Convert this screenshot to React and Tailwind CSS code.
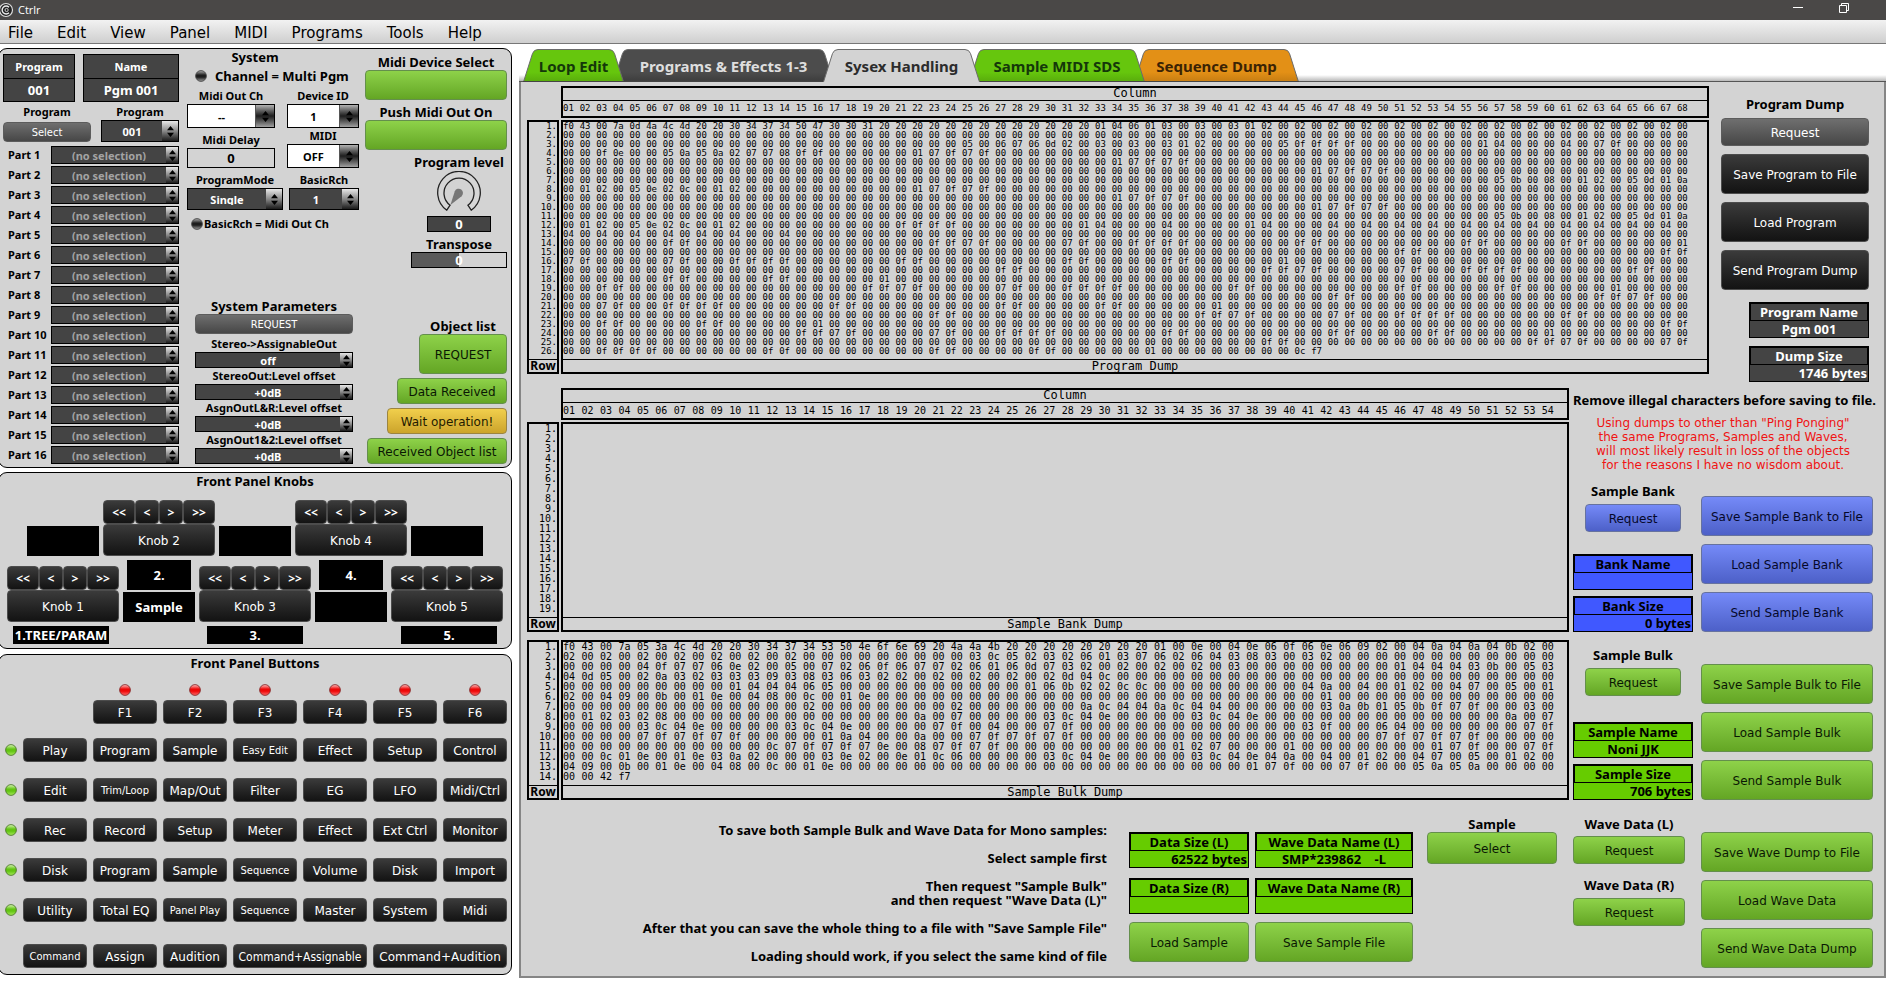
import React from "react";

const expand = (line) =>
  line.split(" ").flatMap((token) => {
    const [value, times] = token.split("*");
    return Array(times ? Number(times) : 1).fill(value);
  });

const PROGRAM_DUMP = [
  "f0 43 00 7a 0d 4a 4c 4d 20 20 30 34 37 34 50 47 30 30 31 20*13 01 04 06 01 03 00 03 00 03 01 02 00 02 00 02 00 02 00 02 00 02 00 02 00 02 00 02 00 02 00 02 00 02 00 02 00",
  "00*68",
  "00*24 05 00 06 07 06 0d 02 00 03 00 03 00 03 01 02 00*4 05 0f*4 00*7 01 04 00*3 04 00 07 0f 00*4",
  "00 00 0f 0e 00 00 05 0a 05 0a 02 07 07 08 0f 0f 00*5 01 07 0f 07 0f 00*42",
  "00*33 01 07 0f 07 0f 00*30",
  "00*45 01 07 0f 07 0f 00*18",
  "00*56 05 0b 00 08 00 01 02 00 05 0d 01 0a",
  "00 01 02 00 05 0e 02 0c 00 01 02 00*10 01 07 0f 07 0f 00*42",
  "00*33 01 07 0f 07 0f 00*30",
  "00*45 01 07 0f 07 0f 00*18",
  "00*56 05 0b 00 08 00 01 02 00 05 0d 01 0a",
  "00 01 02 00 05 0e 02 0c 00 01 02 00*9 0f*4 00*7 01 04 00*3 04 00*4 01 04 00*3 04 00 04 00 04 00 04 00 04 00 04 00 04 00 04 00 04 00 04 00 04 00",
  "04 00 04 00 04 00 04 00 04 00 04 00 00 04 00*54",
  "00*6 0f 0f 00*14 0f 0f 07 0f 00*4 07 0f 00 00 0f*4 00*6 0f 0f 00*8 0f 0f 00*4 0f 0f 00*5 01",
  "00*50 0f 0f 00*14 0f 0f",
  "07 0f 00*4 07 0f 00 00 0f*4 00*6 0f 0f 00*8 0f 0f 00*4 0f 0f 00*5 01 00*24",
  "00*26 0f 0f 00*14 0f 0f 07 0f 00*4 07 0f 00 00 0f*4 00*6 0f 0f 00 00",
  "00*6 0f 0f 00*4 0f 0f 00*5 01 00*48",
  "00 00 0f 0f 00*14 0f 0f 07 0f 00*4 07 0f 00 00 0f*4 00*6 0f 0f 00*8 0f 0f 00*4 0f 0f 00*5 01 00*4",
  "00*46 0f 0f 00*14 0f 0f 07 0f 00 00",
  "00 00 07 0f 00 00 0f*4 00*6 0f 0f 00*8 0f 0f 00*4 0f 0f 00*5 01 00*28",
  "00*22 0f 0f 00*14 0f 0f 07 0f 00*4 07 0f 00 00 0f*4 00*6 0f 0f 00*6",
  "00 00 0f 0f 00*4 0f 0f 00*5 01 00*50 0f 0f",
  "00*14 0f 0f 07 0f 00*4 07 0f 00 00 0f*4 00*6 0f 0f 00*8 0f 0f 00*4 0f 0f 00*5 01 00*8",
  "00*42 0f 0f 00*14 0f 0f 07 0f 00*4 07 0f",
  "00 00 0f*4 00*6 0f 0f 00*8 0f 0f 00*4 0f 0f 00*5 01 00*8 0c f7",
].map(expand);

const BANK_DUMP = Array(19).fill([]);

const BULK_DUMP = [
  "f0 43 00 7a 05 3a 4c 4d 20 20 30 34 37 34 53 50 4e 6f 6e 69 20 4a 4a 4b 20 20 20*6 01 00 0e 00 04 0e 06 0f 06 0e 06 09 02 00 04 0a 04 0a 04 0b 02 00",
  "02 00 02 00 02 00 02 00 02 00 02 00 02 00 00*8 03 0c 05 02 03 02 06 01 03 07 06 02 06 04 03 08 03 00 03 02 00*12",
  "00*4 04 0f 07 07 06 0e 02 00 05 00 07 02 06 0f 06 07 07 02 06 01 06 0d 07 03 02 00 02 00 02 00 02 00 03 00*8 01 04 04 04 03 0b 00 05 03",
  "04 0d 05 00 02 0a 03 02 03 03 03 09 03 08 03 06 03 02 02 00 02 00 02 00 02 00 02 0d 04 0c 00*24",
  "00*9 01 04 04 04 06 05 00*10 01 06 0b 02 02 0c 0c 00*8 04 0a 00 04 00 01 02 00 04 07 00 05 00 01",
  "02 00 04 09 00 0b 00 01 0e 00 04 08 00 0c 00 01 0e 00*24 01 00*12",
  "00*13 02 00*7 02 00*6 0a 0c 04 04 0a 0c 04 04 00*5 03 0a 0b 01 05 0b 0f 07 0f 00 00 03 00",
  "00 01 02 03 02 08 00*13 0a 00 07 00*4 03 0c 04 0e 00*4 03 0c 04 0e 00*13 0a 00 07",
  "00*4 03 0c 04 0e 00*4 03 0c 04 0e 00*4 07 0f 00 04 00 00 07 0f 00*12 03 0f 00 00 06 04 00*6 07 0f",
  "00*4 07 0f 07 0f 07 0f 00*4 01 0a 04 00 00 0a 00 00 07 0f 07 0f 07 0f 00*16 07 0f 07 0f 07 0f 00*4",
  "00*11 0c 07 0f 07 0f 07 0e 00 08 07 0f 07 0f 00*9 01 02 07 00*3 01 00*7 01 07 0f 00 00 07 0f",
  "00 00 0c 01 0e 00 01 0e 03 0a 02 00*3 03 0e 02 00 0e 01 0c 06 00*4 03 0c 04 0e 00*4 03 0c 04 0e 04 0a 00 04 00 01 02 00 04 07 00 05 00 01 02 00",
  "04 09 00 0b 00 01 0e 00 04 08 00 0c 00 01 0e 00*22 01 07 0f 00 00 07 0f 00 00 05 0a 05 0a 00*4",
  "00 00 42 f7",
].map(expand);

const BOLD = "font-['Noto_Sans','Open_Sans',sans-serif] font-bold";
const CONDENSED = "font-['DejaVu_Sans_Condensed','DejaVu_Sans',sans-serif]";

const TONES = {
  dark: "bg-linear-to-b from-[#3b3b3b] to-[#131313] border-[#4c4c4c] text-white",
  gray: "bg-linear-to-b from-[#6f6f6f] to-[#474747] border-[#5c5c5c] text-white",
  green: "bg-linear-to-b from-[#8ed249] to-[#64a624] border-[#648f4c] text-[#0a1803]",
  blue: "bg-linear-to-b from-[#758af8] to-[#4d60c8] border-[#66729f] text-[#05082a]",
  yellow: "bg-linear-to-b from-[#f1cf4c] to-[#cca42b] border-[#9c8540] text-[#241b00]",
};

function Btn({ tone = "dark", className = "", children, ...rest }) {
  return (
    <button
      type="button"
      className={`flex items-center justify-center whitespace-nowrap rounded border pt-0.5 text-xs leading-4 ${TONES[tone]} ${className}`}
      {...rest}
    >
      {children}
    </button>
  );
}

function Label({ size = "text-[11px]", className = "", as: Tag = "div", children, ...rest }) {
  return (
    <Tag className={`${BOLD} ${size} block h-4 whitespace-nowrap text-center leading-4 ${className}`} {...rest}>
      {children}
    </Tag>
  );
}

function Arrows({ className }) {
  return (
    <span className={`pointer-events-none flex shrink-0 items-center justify-center ${className}`}>
      <svg width="7" height="11" viewBox="0 0 7 11" fill="#000" aria-hidden="true">
        <path d="M3.5 0 7 4.2H0zM3.5 11 0 6.8h7z" />
      </svg>
    </span>
  );
}

function Stepper({ id, label, value, tone = "dark", size = "text-[11px]", className = "", arrows = "w-4" }) {
  const body = tone === "white" ? "bg-white text-black" : tone === "muted" ? "bg-[#444] text-[#a3a3a3]" : "bg-[#444] text-white";
  const fill =
    tone === "white"
      ? "bg-linear-to-b from-[#b4b4b4] via-[#1e1e1e] to-[#a2a2a2] border-l border-[#555]"
      : "bg-linear-to-b from-[#e8e8e8] via-[#8a8a8a] to-[#1c1c1c]";
  return (
    <div className={`flex border border-black ${body} ${className}`}>
      <select
        id={id}
        aria-label={label}
        defaultValue={value}
        className={`min-w-0 flex-1 appearance-none bg-transparent p-0 leading-none [text-align-last:center] ${BOLD} ${size}`}
      >
        <option>{value}</option>
      </select>
      <Arrows className={`${arrows} ${fill}`} />
    </div>
  );
}

const LEDS = {
  red: { rim: "#8a2f2f", top: "#ffc4c4", mid: "#ee0808", low: "#ff6a6a" },
  green: { rim: "#4f7a2d", top: "#dcf8ba", mid: "#62c412", low: "#a6ea5c" },
  off: { rim: "#4a4a4a", top: "#b0b0b0", mid: "#1d1d1d", low: "#a0a0a0" },
};

function Led({ color = "off" }) {
  const c = LEDS[color];
  return (
    <svg width="12" height="12" viewBox="0 0 12 12" className="shrink-0" aria-hidden="true">
      <defs>
        <linearGradient id={`led-${color}`} x1="0" y1="0" x2="0" y2="1">
          <stop offset="0" stopColor={c.top} />
          <stop offset="0.42" stopColor={c.mid} />
          <stop offset="0.6" stopColor={c.mid} />
          <stop offset="1" stopColor={c.low} />
        </linearGradient>
      </defs>
      <circle cx="6" cy="6" r="5.4" fill={`url(#led-${color})`} stroke={c.rim} strokeWidth="0.9" />
    </svg>
  );
}

function Panel({ className = "", children }) {
  return <section className={`-ml-0.5 rounded-[9px] border border-black bg-[#d3d3d3] ${className}`}>{children}</section>;
}

function Readout({ title, value, className }) {
  return (
    <div className={`flex h-12 flex-col border border-black bg-[#444] text-center text-white ${BOLD} ${className}`}>
      <div className="flex-1 border-b border-black text-[11px] leading-[23px]">{title}</div>
      <div className="flex-1 text-[13px] leading-[22px]">{value}</div>
    </div>
  );
}

function SystemPanel() {
  return (
    <Panel className="flex pr-1 pb-[3px] pl-1">
      <div className="w-44 pt-[5px]">
        <div className="flex gap-2">
          <Readout title="Program" value="001" className="w-[72px]" />
          <Readout title="Name" value="Pgm 001" className="w-24" />
        </div>
        <div className="mt-0.5 flex items-end justify-between">
          <div className="w-[88px]">
            <Label className="mb-0.5">Program</Label>
            <Btn tone="gray" className={`h-5 w-full text-[11px] ${CONDENSED}`}>Select</Btn>
          </div>
          <div className="w-[78px]">
            <Label as="label" htmlFor="program-no">Program</Label>
            <Stepper id="program-no" value="001" className="h-[22px]" />
          </div>
        </div>
        <div className="mt-1 flex flex-col gap-0.5">
          {Array.from({ length: 16 }, (_, i) => (
            <div key={i} className="flex h-[18px] items-center justify-between">
              <label htmlFor={`part-${i}`} className={`pl-[5px] text-[11px] leading-4 ${BOLD}`}>
                Part {i + 1}
              </label>
              <Stepper id={`part-${i}`} value="(no selection)" tone="muted" arrows="w-3" className="h-full w-32" />
            </div>
          ))}
        </div>
      </div>

      <div className="ml-2 flex w-[172px] flex-col">
        <Label size="text-[13px]" className="-ml-9">System</Label>
        <div className="mt-[3px] flex items-center gap-2 pl-2">
          <Led />
          <Label size="text-[13px]">Channel = Multi Pgm</Label>
        </div>
        <div className="mt-1 flex justify-between">
          <div className="w-[88px]">
            <Label as="label" htmlFor="midi-out">Midi Out Ch</Label>
            <Stepper id="midi-out" value="--" tone="white" arrows="w-[19px]" className="h-6" />
            <Label as="label" htmlFor="midi-delay" className="mt-1">Midi Delay</Label>
            <input
              id="midi-delay"
              defaultValue="0"
              className={`block h-5 w-full border border-black bg-transparent text-center text-[13px] leading-none ${BOLD}`}
            />
          </div>
          <div className="w-[72px]">
            <Label as="label" htmlFor="device-id">Device ID</Label>
            <Stepper id="device-id" value="1" tone="white" arrows="w-[19px]" className="h-6" />
            <Label as="label" htmlFor="midi-switch">MIDI</Label>
            <Stepper id="midi-switch" value="OFF" tone="white" arrows="w-[19px]" className="h-6" />
          </div>
        </div>
        <div className="mt-1 flex justify-between">
          <div className="w-24">
            <Label as="label" htmlFor="program-mode">ProgramMode</Label>
            <Stepper id="program-mode" value="Single" className="h-[22px]" />
          </div>
          <div className="w-[70px]">
            <Label as="label" htmlFor="basic-rch">BasicRch</Label>
            <Stepper id="basic-rch" value="1" className="h-[22px]" />
          </div>
        </div>
        <div className="mt-1.5 flex items-center gap-px pl-1">
          <Led />
          <Label>BasicRch = Midi Out Ch</Label>
        </div>
        <div className="mt-auto ml-2 w-[158px]">
          <Label size="text-[13px]">System Parameters</Label>
          <Btn tone="gray" className={`mb-0.5 h-5 w-full text-[11px] ${CONDENSED}`}>REQUEST</Btn>
          {[
            ["Stereo->AssignableOut", "off"],
            ["StereoOut:Level offset", "+0dB"],
            ["AsgnOutL&R:Level offset", "+0dB"],
            ["AsgnOut1&2:Level offset", "+0dB"],
          ].map(([name, value]) => (
            <div key={name}>
              <Label as="label" htmlFor={name}>{name}</Label>
              <Stepper id={name} value={value} arrows="w-3" className="h-4" />
            </div>
          ))}
        </div>
      </div>

      <div className="ml-1.5 flex w-[142px] flex-col items-end pt-[5px]">
        <Label size="text-[13px]" className="w-full">Midi Device Select</Label>
        <Btn tone="green" aria-label="Midi Device Select" className="h-[30px] w-full" />
        <Label size="text-[13px]" className="mt-1 w-full">Push Midi Out On</Label>
        <Btn tone="green" aria-label="Push Midi Out On" className="h-[30px] w-full" />
        <div className="mt-1 flex w-24 flex-col items-center">
          <Label as="label" htmlFor="level" size="text-[13px]">Program level</Label>
          <div className="relative mt-px h-[45px]">
            <svg width="46" height="42" viewBox="0 0 46 42" aria-hidden="true">
              <path
                d="M10.8 39.2A21.3 21.3 0 1 1 35.2 39.2L31.9 34.2A15 15 0 1 0 14.1 34.2Z"
                fill="#d6d6d6"
                stroke="#222"
                strokeWidth="1.3"
              />
              <path d="M14.4 34 18.8 20.2A4.3 4.3 0 1 1 25.6 25.2Z" fill="#777" />
            </svg>
            <input id="level" type="range" min="0" max="100" defaultValue="0" className="absolute inset-0 w-full opacity-0" />
          </div>
          <output htmlFor="level" className={`h-4 w-16 border border-black bg-[#444] text-center text-[13px] leading-[14px] text-white ${BOLD}`}>0</output>
          <Label as="label" htmlFor="transpose" size="text-[13px]" className="mt-1">Transpose</Label>
          <div className="relative h-4 w-full">
            <input
              id="transpose"
              type="range"
              min="-64"
              max="64"
              defaultValue="0"
              className="block h-4 w-full appearance-none border border-black bg-linear-to-r from-[#5a5a5a] from-50% to-[#d3d3d3] to-50% [&::-webkit-slider-thumb]:size-0 [&::-webkit-slider-thumb]:appearance-none"
            />
            <span className={`pointer-events-none absolute inset-0 text-center text-[13px] leading-4 text-white ${BOLD}`}>0</span>
          </div>
        </div>
        <div className="mt-auto flex flex-col items-end gap-1">
          <div className="w-[88px]">
            <Label size="text-[13px]">Object list</Label>
            <Btn tone="green" className="h-10 w-full">REQUEST</Btn>
          </div>
          <Btn tone="green" className="h-[26px] w-[110px]">Data Received</Btn>
          <Btn tone="yellow" className="h-[26px] w-[120px]">Wait operation!</Btn>
          <Btn tone="green" className="h-[26px] w-[140px]">Received Object list</Btn>
        </div>
      </div>
    </Panel>
  );
}

function Knob({ n }) {
  return (
    <div className="w-28">
      <div className="flex">
        {["<<", "<", ">", ">>"].map((t) => (
          <Btn key={t} className={`h-6 ${BOLD} ${t.length > 1 ? "w-8" : "w-6"}`}>{t}</Btn>
        ))}
      </div>
      <Btn className="h-8 w-full">Knob {n}</Btn>
    </div>
  );
}

function Screen({ className = "h-[30px] w-[72px]", children }) {
  return (
    <output className={`flex items-center justify-center whitespace-nowrap bg-black text-[13px] leading-4 text-white ${BOLD} ${className}`}>
      {children}
    </output>
  );
}

function KnobsPanel() {
  return (
    <Panel className="pb-1">
      <Label as="h2" size="text-[13px]">Front Panel Knobs</Label>
      <div className="mt-[11px] flex items-end justify-center gap-1">
        <Screen />
        <Knob n={2} />
        <Screen />
        <Knob n={4} />
        <Screen />
      </div>
      <div className="mt-1 flex items-end justify-center gap-1">
        <Knob n={1} />
        <div className="flex flex-col items-center gap-0.5">
          <Screen className="h-[30px] w-16">2.</Screen>
          <Screen>Sample</Screen>
        </div>
        <Knob n={3} />
        <div className="flex flex-col items-center gap-0.5">
          <Screen className="h-[30px] w-16">4.</Screen>
          <Screen />
        </div>
        <Knob n={5} />
      </div>
      <div className="mt-1 flex justify-between px-3.5">
        <Screen className="h-[18px] w-24">1.TREE/PARAM</Screen>
        <Screen className="h-[18px] w-24">3.</Screen>
        <Screen className="h-[18px] w-24">5.</Screen>
      </div>
    </Panel>
  );
}

const BUTTON_ROWS = [
  ["Play", "Program", "Sample", "Easy Edit", "Effect", "Setup", "Control"],
  ["Edit", "Trim/Loop", "Map/Out", "Filter", "EG", "LFO", "Midi/Ctrl"],
  ["Rec", "Record", "Setup", "Meter", "Effect", "Ext Ctrl", "Monitor"],
  ["Disk", "Program", "Sample", "Sequence", "Volume", "Disk", "Import"],
  ["Utility", "Total EQ", "Panel Play", "Sequence", "Master", "System", "Midi"],
];
const NARROW = ["Easy Edit", "Trim/Loop", "Sequence", "Panel Play", "Command"];
const narrow = (t) => (NARROW.includes(t) ? `text-[11px] ${CONDENSED}` : "");

function ButtonsPanel() {
  return (
    <Panel className="mt-px pb-1.5 pl-1.5">
      <Label as="h2" size="text-[13px]" className="pr-1.5">Front Panel Buttons</Label>
      <div className="mt-[13px] grid grid-cols-[12px_repeat(7,64px)] items-center gap-x-1.5">
        {[1, 2, 3, 4, 5, 6].map((n) => (
          <div key={n} className={`mb-1 flex justify-center ${n === 1 ? "col-start-3" : ""}`}>
            <Led color="red" />
          </div>
        ))}
        {[1, 2, 3, 4, 5, 6].map((n) => (
          <Btn key={n} className={`h-6 ${n === 1 ? "col-start-3" : ""}`}>F{n}</Btn>
        ))}
      </div>
      <div className="mt-3.5 grid grid-cols-[12px_repeat(7,64px)] items-center gap-x-1.5 gap-y-4">
        {BUTTON_ROWS.map((row) => (
          <React.Fragment key={row[0]}>
            <Led color="green" />
            {row.map((t, i) => (
              <Btn key={i} className={`h-6 ${narrow(t)}`}>{t}</Btn>
            ))}
          </React.Fragment>
        ))}
      </div>
      <div className="mt-[22px] grid grid-cols-[12px_repeat(7,64px)] gap-x-1.5">
        <Btn className={`col-start-2 h-6 ${narrow("Command")}`}>Command</Btn>
        <Btn className="h-6">Assign</Btn>
        <Btn className="h-6">Audition</Btn>
        <Btn className={`col-span-2 h-6 ${CONDENSED}`}>Command+Assignable</Btn>
        <Btn className="col-span-2 h-6">Command+Audition</Btn>
      </div>
    </Panel>
  );
}

const TABS = [
  { name: "Loop Edit", width: 101, fill: "#66c60d", shade: "#58ab0c", className: "z-20 text-[#14380a]" },
  { name: "Programs & Effects 1-3", width: 221, fill: "#4c4c4c", shade: "#3c3c3c", className: "z-10 text-[#dedede]" },
  { name: "Sysex Handling", width: 157, fill: "#d3d3d3", shade: "#d3d3d3", className: "z-30 text-[#2c2c2c]", active: true },
  { name: "Sample MIDI SDS", width: 176, fill: "#66c60d", shade: "#58ab0c", className: "z-20 text-[#14380a]" },
  { name: "Sequence Dump", width: 165, fill: "#e39016", shade: "#c57c12", className: "z-10 text-[#3b2304]" },
];

function Tabs() {
  return (
    <div role="tablist" className="flex items-end border-b border-[#555] bg-[linear-gradient(to_top,#b9b9b9,#fff_6px)] pt-[5px] pl-[15px]">
      {TABS.map((t) => (
        <button
          key={t.name}
          type="button"
          role="tab"
          aria-selected={Boolean(t.active)}
          className={`relative -mb-px -ml-[11px] h-[33px] whitespace-nowrap text-[15px] leading-8 ${BOLD} ${t.className}`}
          style={{ width: t.width }}
        >
          <svg className="absolute inset-0" width={t.width} height="33" viewBox={`0 0 ${t.width} 33`} aria-hidden="true">
            <defs>
              <linearGradient id={`tab-${t.width}`} x1="0" y1="0" x2="0" y2="1">
                <stop offset="0.7" stopColor={t.fill} />
                <stop offset="1" stopColor={t.shade} />
              </linearGradient>
            </defs>
            <path
              d={`M0.5 33 9.5 4.5Q11 .5 15 .5H${t.width - 15}Q${t.width - 11} .5 ${t.width - 9.5} 4.5L${t.width - 0.5} 33`}
              fill={`url(#tab-${t.width})`}
              stroke="#6b6b6b"
            />
            {!t.active && <path d={`M0 32.5H${t.width}`} stroke="#444" />}
          </svg>
          <span className="relative">{t.name}</span>
        </button>
      ))}
    </div>
  );
}

function Rule({ n, height }) {
  return (
    <tr className={height}>
      <td className="bg-black p-0" />
      <td className="p-0" />
      <td colSpan={n + 2} className="bg-black p-0" />
    </tr>
  );
}

function Dump({ title, columns: n, rows, text, header, tail, rowClass }) {
  return (
    <table aria-label={title} className={`w-full table-fixed border-separate border-spacing-0 font-['DejaVu_Sans_Mono',monospace] text-black ${text}`}>
      <colgroup>
        <col className="w-8" />
        <col className="w-0.5" />
        <col className="w-0.5" />
        {Array.from({ length: n }, (_, i) => (
          <col key={i} />
        ))}
        <col className={tail} />
      </colgroup>
      {header && (
        <thead>
          <tr>
            <td colSpan={2} className="p-0" />
            <td className="bg-black p-0" />
            <th colSpan={n + 1} className="h-[15px] border-t-2 border-r-2 border-b border-black p-0 align-top text-xs leading-[10px] font-normal">Column</th>
          </tr>
          <tr>
            <td colSpan={2} className="p-0" />
            <td className="bg-black p-0" />
            {Array.from({ length: n }, (_, i) => (
              <th key={i} scope="col" className="h-[17px] border-b-2 border-black p-0 text-left font-normal">
                {String(i + 1).padStart(2, "0")}
              </th>
            ))}
            <td className="border-r-2 border-b-2 border-black p-0" />
          </tr>
          <tr className="h-0.5">
            <td colSpan={n + 4} className="p-0" />
          </tr>
        </thead>
      )}
      <tbody>
        <Rule n={n} height="h-0.5" />
        {rows.map((bytes, r) => (
          <tr key={r} className={rowClass}>
            <th scope="row" className="border-x-2 border-black p-0 text-right font-normal">{r + 1}.</th>
            <td className="p-0" />
            <td className="bg-black p-0" />
            {bytes.map((b, c) => (
              <td key={c} className="p-0">{b}</td>
            ))}
            {bytes.length < n && <td colSpan={n - bytes.length} className="p-0" />}
            <td className="border-r-2 border-black p-0" />
          </tr>
        ))}
        <tr className="h-[3px]">
          <td className="border-x-2 border-black p-0" />
          <td className="p-0" />
          <td className="bg-black p-0" />
          <td colSpan={n + 1} className="border-r-2 border-black p-0" />
        </tr>
        <Rule n={n} height="h-px" />
        <tr className="h-3">
          <th className={`border-x-2 border-black p-0 text-xs leading-3 ${BOLD}`}>Row</th>
          <td className="p-0" />
          <td className="bg-black p-0" />
          <td colSpan={n + 1} className="border-r-2 border-black p-0 text-center text-xs leading-3">{title}</td>
        </tr>
        <Rule n={n} height="h-0.5" />
      </tbody>
    </table>
  );
}

const INFO = {
  dark: "bg-[#444] text-white",
  blue: "bg-[#4058ff] text-black",
  green: "bg-[#66cc00] text-black",
};

function Info({ title, value, tone = "green", align = "text-center", className = "w-[120px]" }) {
  return (
    <div className={`whitespace-pre text-[13px] ${BOLD} ${INFO[tone]} ${className}`}>
      <div className="h-[19px] border-2 border-b border-black text-center leading-4">{title}</div>
      <div className={`h-[17px] border border-t-0 border-black px-px leading-4 ${align}`}>{value}</div>
    </div>
  );
}

function BigButtons({ tone, names, className = "w-[172px]" }) {
  return (
    <div className={`flex flex-col gap-2 ${className}`}>
      {names.map((t) => (
        <Btn key={t} tone={tone} className="h-10">{t}</Btn>
      ))}
    </div>
  );
}

function TransferGroup({ title, tone, nameTitle, name, sizeTitle, size, actions, spacing }) {
  return (
    <div className="flex items-end gap-2">
      <div className="flex w-[120px] flex-col items-center">
        <Label size="text-[13px]">{title}</Label>
        <Btn tone={tone} className={`mt-[5px] h-7 w-24 ${spacing}`}>Request</Btn>
        <Info tone={tone} title={nameTitle} value={name} />
        <div className="h-1.5" />
        <Info tone={tone} title={sizeTitle} value={size} align="text-right" />
      </div>
      <BigButtons tone={tone} names={actions} />
    </div>
  );
}

function SysexPage() {
  return (
    <div className="border-x-2 border-b-2 border-[#858585] bg-[#d3d3d3] pt-1 pr-[11px] pb-2 pl-1.5">
      <div className="flex items-start">
        <div className="min-w-0 flex-1">
          <Dump header title="Program Dump" columns={68} rows={PROGRAM_DUMP} text="text-[9px] leading-[9px]" rowClass="h-[9px]" tail="w-[15px]" />
        </div>
        <div className="mr-1 ml-3 flex w-[148px] flex-col items-end pt-2.5">
          <Label size="text-[13px]" className="w-full">Program Dump</Label>
          <Btn tone="gray" className="mt-1.5 mb-2 h-7 w-full">Request</Btn>
          <BigButtons tone="dark" className="mb-3 w-full" names={["Save Program to File", "Load Program", "Send Program Dump"]} />
          <Info tone="dark" title="Program Name" value="Pgm 001" />
          <div className="h-2" />
          <Info tone="dark" title="Dump Size" value="1746 bytes" align="text-right" />
        </div>
      </div>

      <div className="mt-1.5 flex items-start gap-1">
        <div className="flex min-w-0 flex-1 flex-col gap-2">
          <Dump header title="Sample Bank Dump" columns={54} rows={BANK_DUMP} text="text-[10px] leading-[10px]" rowClass="h-2.5" tail="w-2" />
          <Dump title="Sample Bulk Dump" columns={54} rows={BULK_DUMP} text="text-[10px] leading-[10px]" rowClass="h-2.5" tail="w-2" />
        </div>
        <div className="w-[300px] pt-1">
          <Label as="p" size="text-[13px]">Remove illegal characters before saving to file.</Label>
          <p className="mt-2 mb-[11px] text-center text-xs leading-[14px] text-[#f01414]">
            Using dumps to other than "Ping Ponging"
            <br />
            the same Programs, Samples and Waves,
            <br />
            will most likely result in loss of the objects
            <br />
            for the reasons I have no wisdom about.
          </p>
          <TransferGroup
            title="Sample Bank"
            tone="blue"
            nameTitle="Bank Name"
            name=""
            sizeTitle="Bank Size"
            size="0 bytes"
            spacing="mb-[22px]"
            actions={["Save Sample Bank to File", "Load Sample Bank", "Send Sample Bank"]}
          />
          <div className="h-[15px]" />
          <TransferGroup
            title="Sample Bulk"
            tone="green"
            nameTitle="Sample Name"
            name="Noni JJK"
            sizeTitle="Sample Size"
            size="706 bytes"
            spacing="mb-[26px]"
            actions={["Save Sample Bulk to File", "Load Sample Bulk", "Send Sample Bulk"]}
          />
        </div>
      </div>

      <div className="flex items-start justify-end pt-4">
        <div className={`mt-[7px] mr-[22px] flex flex-1 flex-col gap-3.5 text-right text-[13px] leading-[14px] ${BOLD}`}>
          <p>To save both Sample Bulk and Wave Data for Mono samples:</p>
          <p>Select sample first</p>
          <p>
            Then request "Sample Bulk"
            <br />
            and then request "Wave Data (L)"
          </p>
          <p>After that you can save the whole thing to a file with "Save Sample File"</p>
          <p>Loading should work, if you select the same kind of file</p>
        </div>
        <div className="mt-4 mr-3.5 grid grid-cols-[120px_158px] gap-x-1.5">
          <Info title="Data Size (L)" value="62522 bytes" align="text-right" />
          <Info title="Wave Data Name (L)" value="SMP*239862    -L" className="w-full" />
          <div className="col-span-2 h-2.5" />
          <Info title="Data Size (R)" value="" />
          <Info title="Wave Data Name (R)" value="" className="w-full" />
          <div className="col-span-2 h-2" />
          <Btn tone="green" className="h-10">Load Sample</Btn>
          <Btn tone="green" className="h-10">Save Sample File</Btn>
        </div>
        <div className="mr-4 w-[130px]">
          <Label size="text-[13px]">Sample</Label>
          <Btn tone="green" className="h-8 w-full">Select</Btn>
        </div>
        <div className="mr-4 w-28">
          <Label size="text-[13px]">Wave Data (L)</Label>
          <Btn tone="green" className="mt-1 mb-[13px] h-7 w-full">Request</Btn>
          <Label size="text-[13px]">Wave Data (R)</Label>
          <Btn tone="green" className="mt-[5px] h-7 w-full">Request</Btn>
        </div>
        <div className="pt-4">
          <BigButtons tone="green" names={["Save Wave Dump to File", "Load Wave Data", "Send Wave Data Dump"]} />
        </div>
      </div>
    </div>
  );
}

export default function App() {
  return (
    <div className="min-h-screen overflow-x-hidden bg-white font-['DejaVu_Sans',sans-serif] text-black">
      <header className="flex h-5 items-center bg-[#4a4847] text-white">
        <svg width="14" height="16" viewBox="2 0 14 16" fill="none" aria-hidden="true">
          <circle cx="8" cy="8" r="6.5" fill="#222" stroke="#ddd" strokeWidth="1.2" />
          <path d="M11 5.2A4 4 0 1 0 11 10.8" stroke="#eee" strokeWidth="1.4" />
          <circle cx="8.6" cy="8" r="1.6" stroke="#ccc" />
        </svg>
        <span className="ml-1 font-['Open_Sans','Noto_Sans',sans-serif] text-[11px] leading-4">Ctrlr</span>
        <div className="mr-9 ml-auto flex items-center gap-9 pb-1">
          <button type="button" aria-label="Minimize">
            <svg width="10" height="10" viewBox="0 0 10 10" stroke="#fff"><path d="M0 4.5h10" /></svg>
          </button>
          <button type="button" aria-label="Restore">
            <svg width="11" height="11" viewBox="0 0 11 11" fill="none" stroke="#fff">
              <path d="M.5 2.5h7v7h-7zM2.5 2.5v-2h7v7h-2" />
            </svg>
          </button>
        </div>
      </header>
      <nav className="flex h-6 items-center gap-6 border-b border-[#777] bg-linear-to-b from-[#f2f2f2] to-[#cfcfcf] pt-0.5 pl-2 text-[15px] leading-5">
        {["File", "Edit", "View", "Panel", "MIDI", "Programs", "Tools", "Help"].map((m) => (
          <button key={m} type="button">{m}</button>
        ))}
      </nav>
      <main className="flex items-start">
        <div className="flex w-[512px] shrink-0 flex-col gap-1 pt-1">
          <SystemPanel />
          <KnobsPanel />
          <ButtonsPanel />
        </div>
        <div className="ml-[7px] min-w-0 flex-1">
          <Tabs />
          <SysexPage />
        </div>
      </main>
    </div>
  );
}
